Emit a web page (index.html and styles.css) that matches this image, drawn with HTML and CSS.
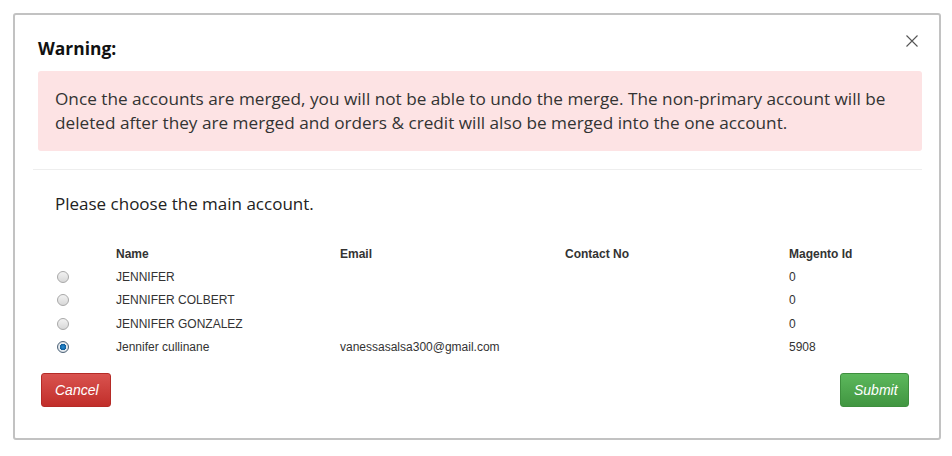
FILE: index.html
```html
<!DOCTYPE html>
<html lang="en">
  <head>
    <meta charset="UTF-8" />
    <meta name="viewport" content="width=device-width, initial-scale=1.0" />
    <title>Merge Accounts</title>
    <link rel="stylesheet" href="styles.css">
  </head>
  <body>
    <div class="modal">
      <!-- Header -->
      <div class="modal-header">
        <div class="title-row">
          <h4 class="modal-title">Warning:</h4>
          <button type="button" class="close" aria-label="Close">
            <svg width="12" height="12" viewBox="0 0 12 12">
              <path d="M0.5 0.5 L11.5 11.5 M11.5 0.5 L0.5 11.5" stroke="#555" stroke-width="1.1" fill="none" />
            </svg>
          </button>
        </div>
        <div class="alert">
          Once the accounts are merged, you will not be able to undo the merge. The non-primary account will be
          deleted after they are merged and orders &amp; credit will also be merged into the one account.
        </div>
      </div>

      <hr class="divider" />

      <!-- Body -->
      <form class="modal-body">
        <p class="lead">Please choose the main account.</p>

        <table class="accounts">
          <thead>
            <tr>
              <th class="col-pick"></th>
              <th class="col-name">Name</th>
              <th class="col-email">Email</th>
              <th class="col-contact">Contact No</th>
              <th>Magento Id</th>
            </tr>
          </thead>
          <tbody>
            <tr>
              <td><input type="radio" name="main" value="1" /></td>
              <td>JENNIFER</td>
              <td></td>
              <td></td>
              <td>0</td>
            </tr>
            <tr>
              <td><input type="radio" name="main" value="2" /></td>
              <td>JENNIFER COLBERT</td>
              <td></td>
              <td></td>
              <td>0</td>
            </tr>
            <tr>
              <td><input type="radio" name="main" value="3" /></td>
              <td>JENNIFER GONZALEZ</td>
              <td></td>
              <td></td>
              <td>0</td>
            </tr>
            <tr>
              <td><input type="radio" name="main" value="4" checked /></td>
              <td>Jennifer cullinane</td>
              <td>vanessasalsa300@gmail.com</td>
              <td></td>
              <td>5908</td>
            </tr>
          </tbody>
        </table>

        <div class="actions">
          <button type="button" class="btn btn-cancel">Cancel</button>
          <button type="submit" class="btn btn-submit">Submit</button>
        </div>
      </form>
    </div>
  </body>
</html>
```

FILE: styles.css
```css
body {
  margin: 0;
  padding: 0;
  background-color: #fff;
  font-family: "Segoe UI", "Open Sans", "Noto Sans", sans-serif;
  color: #222;
}

.modal {
  margin: 13px 0 0 13px;
  width: 928px;
  height: 427px;
  box-sizing: border-box;
  border: 2px solid #c2c2c2;
  border-radius: 3px;
}

.modal-header {
  padding: 20px 17px 0 23px;
}

.title-row {
  display: flex;
  justify-content: space-between;
  align-items: flex-start;
  height: 36px;
}

.modal-title {
  margin: 0;
  padding-top: 2px;
  font-size: 17.4px;
  font-weight: 700;
  line-height: 22px;
  color: #111;
}

.close {
  margin: 0 4px 0 0;
  padding: 0;
  border: none;
  background: none;
  width: 12px;
  height: 12px;
  cursor: pointer;
  line-height: 0;
}

.alert {
  background-color: #fde3e4;
  border-radius: 3px;
  padding: 16px 17px;
  font-size: 17.2px;
  line-height: 24px;
  color: #333;
}

.divider {
  margin: 18px 17px 0 18px;
  border: none;
  border-top: 1px solid #eeeeee;
  height: 0;
}

.modal-body {
  padding: 0 17px 0 40px;
}

.lead {
  margin: 22px 0 0 0;
  font-size: 17px;
  line-height: 24px;
  color: #222;
}

.accounts {
  margin-top: 27px;
  width: 866px;
  border-collapse: collapse;
  font-family: "Liberation Sans", Arial, sans-serif;
  font-size: 12px;
  color: #333;
}

.accounts th,
.accounts td {
  padding: 0;
  text-align: left;
  vertical-align: middle;
}

.accounts th {
  font-weight: 700;
  height: 22px;
}

.accounts td {
  height: 23.5px;
}

.col-pick {
  width: 61px;
}

.col-name {
  width: 224px;
}

.col-email {
  width: 225px;
}

.col-contact {
  width: 224px;
}

input[type="radio"] {
  appearance: none;
  -webkit-appearance: none;
  margin: 0 0 0 2px;
  width: 12px;
  height: 12px;
  border-radius: 50%;
  border: 1px solid #a9a9a9;
  background: linear-gradient(#f2f2f2, #d8d8d8);
  box-sizing: border-box;
  display: block;
}

input[type="radio"]:checked {
  border-color: #4f6479;
  background: radial-gradient(circle, #2b8fd6 0, #0d5d9c 3px, #e8edf2 3.5px, #d0d6dc 6px);
}

.actions {
  display: flex;
  justify-content: space-between;
  margin: 14px 13px 0 -14px;
}

.btn {
  height: 34px;
  padding: 0 13px;
  border-radius: 3px;
  font-family: "Liberation Sans", Arial, sans-serif;
  font-size: 14px;
  font-style: italic;
  color: #fff;
  cursor: pointer;
}

.btn-cancel {
  width: 70px;
  background: linear-gradient(#d9534f, #c12e2a);
  border: 1px solid #b52b27;
}

.btn-submit {
  width: 69px;
  background: linear-gradient(#5cb85c, #419641);
  border: 1px solid #3e8f3e;
}
```
